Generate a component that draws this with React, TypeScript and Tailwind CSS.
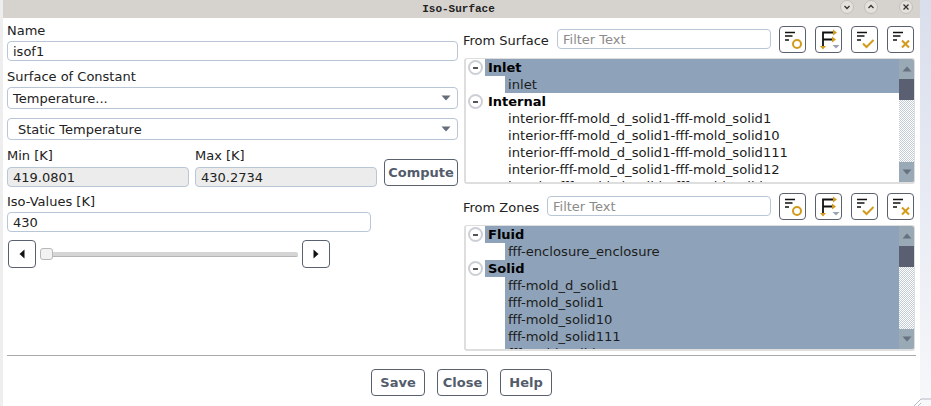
const SANS = "font-['DejaVu_Sans',sans-serif]";

function FilterIcon({ kind }: { kind: "circle" | "check" | "cross" }) {
  return (
    <svg className="shrink-0" width="27" height="27" viewBox="0 0 27 27" fill="none">
      <path d="M6 6.5h10M6 10h7.5M6 14h4" stroke="#111" strokeWidth="1.6" />
      {kind === "circle" && <circle cx="18" cy="18" r="4" stroke="#d39a1c" strokeWidth="2" />}
      {kind === "check" && <path d="M12 17.5l3.5 3.5 7-7" stroke="#d39a1c" strokeWidth="2" />}
      {kind === "cross" && <path d="M15 14.5l7 7M22 14.5l-7 7" stroke="#d39a1c" strokeWidth="2" />}
    </svg>
  );
}

function TreeOrderIcon() {
  return (
    <svg className="shrink-0" width="27" height="27" viewBox="0 0 27 27" fill="none">
      <path d="M8 21V6.5H18M8 13.5H17" stroke="#111" strokeWidth="1.8" />
      <path d="M18 3.5l4 3-4 3zM17 10.5l4 3-4 3zM5 20h6l-3 3.5z" fill="#d39a1c" />
      <path d="M17.5 19h7l-3.5 3.5z" fill="#9aa3b0" />
    </svg>
  );
}

function IconButton({ children }: { children: React.ReactNode }) {
  return (
    <button className="w-[27px] h-[27px] rounded-[4px] border border-[#59606e] bg-white flex items-center justify-center shrink-0">
      {children}
    </button>
  );
}

function TextBox({ value, className = "" }: { value: string; className?: string }) {
  return (
    <div className={`h-[20px] rounded-[4px] border border-[#b9c6d8] pl-[5px] text-[13px] leading-[19px] text-[#222] ${className}`}>
      {value}
    </div>
  );
}

function SelectBox({ value, indent, height }: { value: string; indent: string; height: string }) {
  return (
    <div className={`${height} ${indent} rounded-[4px] border border-[#b9c6d8] bg-white flex items-center justify-between pr-[6px] text-[13px] text-[#222]`}>
      <span className="pt-[1px]">{value}</span>
      <svg width="10" height="6" viewBox="0 0 10 6">
        <path d="M0.5 0.5h9L5 5.5z" fill="#666d7a" />
      </svg>
    </div>
  );
}

function Expander() {
  return (
    <span className="absolute left-[2px] top-[1px] w-[15px] h-[15px] rounded-full border-2 border-[#ccd0d6] bg-white flex items-center justify-center">
      <span className="w-[5px] h-[2px] bg-[#555]" />
    </span>
  );
}

type Row = { text: string; group?: boolean; selected?: boolean };

function TreeRow({ row }: { row: Row }) {
  if (row.group) {
    return (
      <div className="relative h-[17px] pl-[19px] shrink-0">
        <Expander />
        <div className={`h-[17px] pl-[3px] text-[13px] leading-[17px] font-bold text-black ${row.selected ? "bg-[#8ea3b9]" : ""}`}>
          {row.text}
        </div>
      </div>
    );
  }
  return (
    <div className="h-[17px] pl-[39px] shrink-0">
      <div className={`h-[17px] pl-[3px] text-[13.15px] leading-[17px] text-[#1c1c1c] whitespace-nowrap ${row.selected ? "bg-[#8ea3b9]" : ""}`}>
        {row.text}
      </div>
    </div>
  );
}

function ScrollBar() {
  return (
    <div className="w-[15px] flex flex-col shrink-0">
      <div className="h-[20px] bg-[#9aa9b6] flex items-center justify-center">
        <svg width="10" height="6" viewBox="0 0 10 6"><path d="M0.5 5.5h9L5 0.5z" fill="#66707e" /></svg>
      </div>
      <div className="h-[21px] bg-[#5a6072]" />
      <div className="flex-1 bg-[repeating-conic-gradient(#c3ccd6_0%_25%,#ffffff_0%_50%)] bg-[length:2px_2px]" />
      <div className="h-[20px] bg-[#9aa9b6] flex items-center justify-center">
        <svg width="10" height="6" viewBox="0 0 10 6"><path d="M0.5 0.5h9L5 5.5z" fill="#66707e" /></svg>
      </div>
    </div>
  );
}

function Picker({ label, labelWidth, rows }: { label: string; labelWidth: string; rows: Row[] }) {
  return (
    <div className="flex flex-col">
      <div className="flex items-center h-[27px]">
        <span className={`${labelWidth} text-[13px] text-[#222] pt-[2px] shrink-0`}>{label}</span>
        <div className="flex-1 h-[20px] mb-[1px] rounded-[4px] border border-[#b9c6d8] pl-[5px] text-[13px] leading-[19px] text-[#8b8b8b]">
          Filter Text
        </div>
        <div className="flex gap-[9px] ml-[8px] mr-[1px]">
          <IconButton><FilterIcon kind="circle" /></IconButton>
          <IconButton><TreeOrderIcon /></IconButton>
          <IconButton><FilterIcon kind="check" /></IconButton>
          <IconButton><FilterIcon kind="cross" /></IconButton>
        </div>
      </div>
      <div className="h-[126px] mt-[5px] ml-[1px] rounded-[3px] border-l-2 border-b-2 border-r border-t border-[#dedede] flex overflow-hidden bg-white">
        <div className="flex-1 flex flex-col overflow-hidden">
          {rows.map((row) => <TreeRow key={row.text} row={row} />)}
        </div>
        <ScrollBar />
      </div>
    </div>
  );
}

const SURFACE_ROWS: Row[] = [
  { text: "Inlet", group: true, selected: true },
  { text: "inlet", selected: true },
  { text: "Internal", group: true },
  { text: "interior-fff-mold_d_solid1-fff-mold_solid1" },
  { text: "interior-fff-mold_d_solid1-fff-mold_solid10" },
  { text: "interior-fff-mold_d_solid1-fff-mold_solid111" },
  { text: "interior-fff-mold_d_solid1-fff-mold_solid12" },
  { text: "interior-fff-mold_d_solid1-fff-mold_solid131" },
];

const ZONE_ROWS: Row[] = [
  { text: "Fluid", group: true, selected: true },
  { text: "fff-enclosure_enclosure", selected: true },
  { text: "Solid", group: true, selected: true },
  { text: "fff-mold_d_solid1", selected: true },
  { text: "fff-mold_solid1", selected: true },
  { text: "fff-mold_solid10", selected: true },
  { text: "fff-mold_solid111", selected: true },
  { text: "fff-mold_solid12", selected: true },
];

function ArrowButton({ dir }: { dir: "left" | "right" }) {
  return (
    <button className="w-[28px] h-[28px] rounded-[4px] border border-[#59606e] bg-white flex items-center justify-center shrink-0">
      <svg width="6" height="10" viewBox="0 0 6 10">
        <path d={dir === "left" ? "M5.5 0.5v9L0.5 5z" : "M0.5 0.5v9L5.5 5z"} fill="#111" />
      </svg>
    </button>
  );
}

function ActionButton({ label, width }: { label: string; width: string }) {
  return (
    <button className={`${width} h-[27px] rounded-[4px] border border-[#59606e] bg-white text-[13px] font-bold text-[#545c6c] flex items-center justify-center`}>
      {label}
    </button>
  );
}

function WindowButton({ children }: { children: React.ReactNode }) {
  return (
    <span className="w-[14px] h-[14px] rounded-full bg-[#e4e1dd] border border-[#c2bfba] flex items-center justify-center">
      <svg width="8" height="8" viewBox="0 0 8 8" fill="none" stroke="#333" strokeWidth="1.3">{children}</svg>
    </span>
  );
}

export default function App() {
  return (
    <div className={`relative w-[931px] h-[406px] flex overflow-hidden bg-gradient-to-b from-[#d9deec] to-[#f7f8fa] ${SANS}`}>
      <div className="w-[3px] bg-[#eeeeee] shrink-0" />
      <div className="w-[917px] flex flex-col bg-white">
        {/* title bar */}
        <div className="relative h-[18px] bg-[#d6d2ce] flex items-center justify-center shrink-0">
          <span className="text-[11px] font-bold text-[#222] font-['Liberation_Mono',monospace] pr-[6px]">Iso-Surface</span>
          <div className="absolute right-[7px] top-[-1px] h-[15px] flex items-center">
            <WindowButton><path d="M1.5 3L4 5.5 6.5 3" /></WindowButton>
            <span className="w-[10px]" />
            <WindowButton><path d="M1.5 5L4 2.5 6.5 5" /></WindowButton>
            <span className="w-[21px]" />
            <WindowButton><path d="M1.5 1.5l5 5M6.5 1.5l-5 5" /></WindowButton>
          </div>
        </div>

        <div className="flex pl-[4px] pr-[5px]">
          {/* left column */}
          <div className="w-[451px] flex flex-col text-[13px] text-[#222]">
            <label className="h-[18px] mt-[4px] leading-[18px]">Name</label>
            <TextBox value="isof1" className="mt-[1px]" />
            <label className="h-[18px] mt-[7px] leading-[18px]">Surface of Constant</label>
            <div className="mt-[1px]">
              <SelectBox value="Temperature..." indent="pl-[5px]" height="h-[22px]" />
            </div>
            <div className="mt-[9px]">
              <SelectBox value="Static Temperature" indent="pl-[10px]" height="h-[22px]" />
            </div>
            <div className="flex mt-[7px]">
              <div className="w-[188px] flex flex-col">
                <label className="h-[18px] leading-[18px]">Min [K]</label>
                <TextBox value="419.0801" className="w-[182px] bg-[#ececec] mt-[2px]" />
              </div>
              <div className="w-[189px] flex flex-col">
                <label className="h-[18px] leading-[18px]">Max [K]</label>
                <TextBox value="430.2734" className="w-[182px] bg-[#ececec] mt-[2px]" />
              </div>
              <button className="w-[74px] h-[27px] mt-[12px] rounded-[4px] border border-[#59606e] bg-white text-[13px] font-bold text-[#545c6c]">
                Compute
              </button>
            </div>
            <label className="h-[18px] mt-[6px] leading-[18px]">Iso-Values [K]</label>
            <TextBox value="430" className="w-[364px] mt-[1px]" />
            <div className="flex items-center mt-[8px] pl-[1px]">
              <ArrowButton dir="left" />
              <div className="relative w-[258px] h-[12px] flex items-center ml-[4px]">
                <div className="w-[252px] ml-[6px] h-[5px] rounded-[2px] bg-[#d5d5d5] border-b border-[#b5b5b5]" />
                <div className="absolute left-0 top-0 w-[13px] h-[12px] rounded-[3px] border border-[#b8b8b8] bg-[#f2f2f2]" />
              </div>
              <span className="w-[4px]" />
              <ArrowButton dir="right" />
            </div>
          </div>

          {/* right column */}
          <div className="w-[452px] ml-[5px] pt-[8px] flex flex-col">
            <Picker label="From Surface" labelWidth="w-[94px]" rows={SURFACE_ROWS} />
            <div className="mt-[9px]">
              <Picker label="From Zones" labelWidth="w-[84px]" rows={ZONE_ROWS} />
            </div>
          </div>
        </div>

        <div className="h-[1px] bg-[#a9a9a9] mt-[4px] ml-[4px] mr-[4px] shrink-0" />
        <div className="flex justify-center gap-[12px] mt-[13px]">
          <ActionButton label="Save" width="w-[54px]" />
          <ActionButton label="Close" width="w-[51px]" />
          <ActionButton label="Help" width="w-[52px]" />
        </div>
      </div>
      <svg className="absolute right-0 bottom-0" width="18" height="8" viewBox="0 0 18 8" fill="none" stroke="#b5bac4">
        <path d="M1 8l7-7M5 8l3-3M8 1h10" />
      </svg>
    </div>
  );
}
